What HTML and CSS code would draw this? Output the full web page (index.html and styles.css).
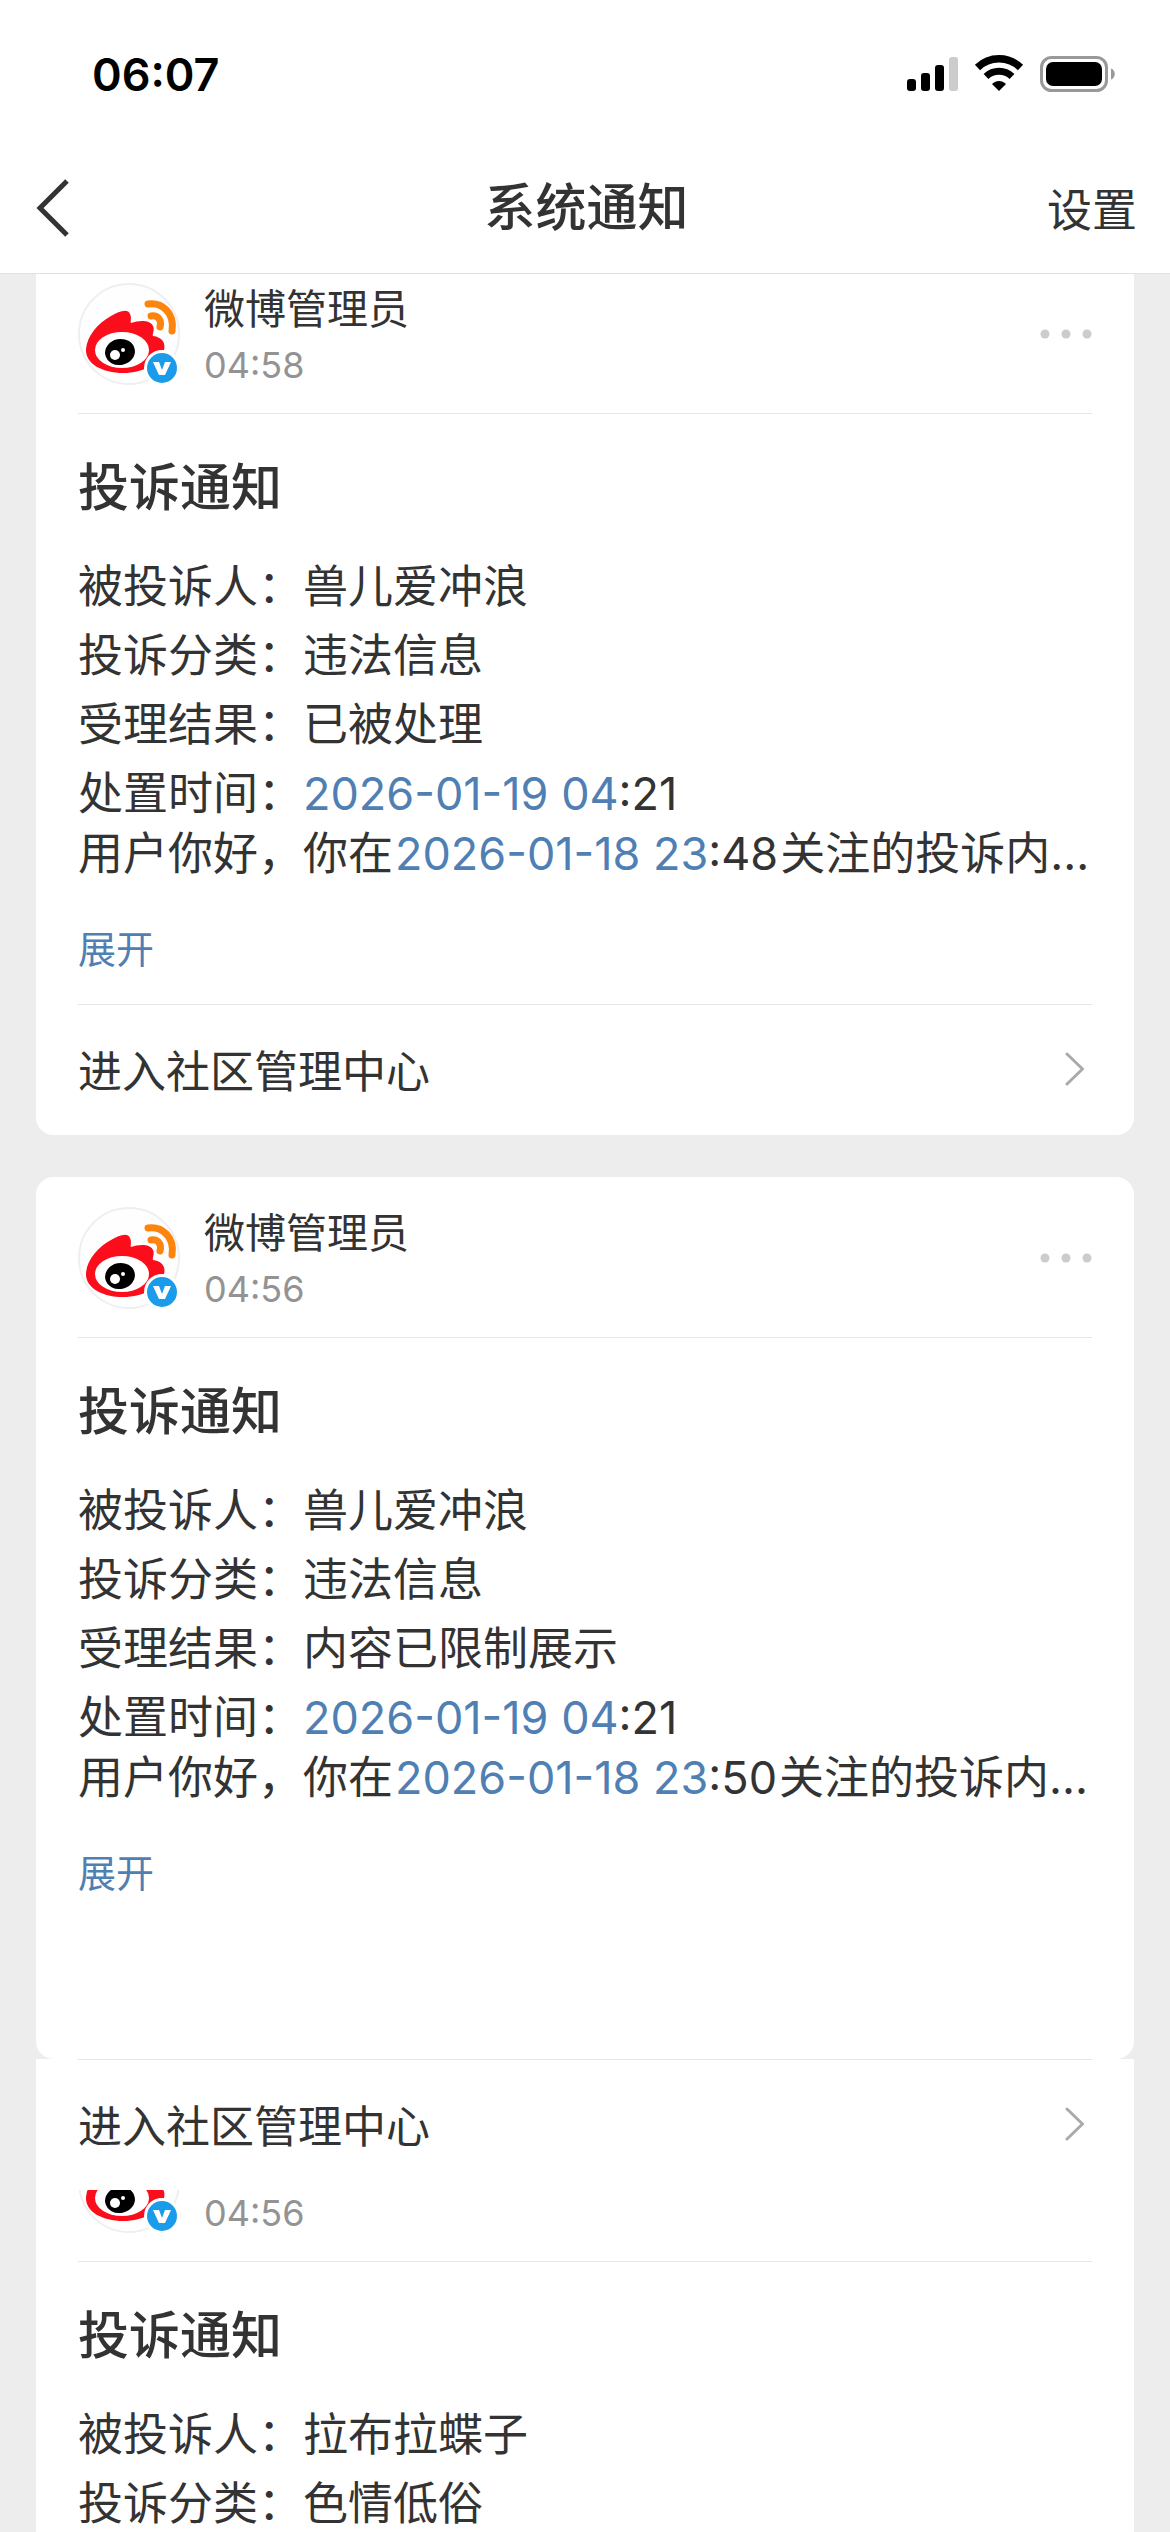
FILE: index.html
```html
<!DOCTYPE html>
<html lang="zh-CN">
<head>
  <meta charset="UTF-8" />
  <meta name="viewport" content="width=device-width, initial-scale=1.0" />
  <title>系统通知</title>
  <link rel="stylesheet" href="styles.css">
</head>
<body>
  <!-- shared shapes -->
  <svg class="sprite" aria-hidden="true">
    <symbol id="avatar" viewBox="0 0 102 102">
      <circle cx="51" cy="51" r="50" fill="#fefefe" stroke="#efefef" stroke-width="2"/>
      <path fill="#fb0d1b" d="M8 66C9 53 20 40 33 33C41 28 50 25 52 31C54 35 52 39 53 40C60 38 71 36 75 43C77 47 74 51 75 53C84 54 88 60 86 67C83 80 66 90 45 90C25 90 7 81 8 66Z"/>
      <ellipse cx="44" cy="67" rx="27" ry="18" fill="#fff"/>
      <ellipse cx="42" cy="69" rx="15" ry="13" fill="#000" transform="rotate(-12 42 69)"/>
      <circle cx="37" cy="72" r="5" fill="#fff"/>
      <circle cx="45" cy="67" r="2" fill="#fff"/>
      <path fill="none" stroke="#fd850d" stroke-width="7" stroke-linecap="round" d="M70 21C84 19 97 30 94 48M73 33C80 32 84 37 82 44"/>
      <circle cx="84" cy="85" r="18" fill="#fff"/>
      <circle cx="84" cy="85" r="15" fill="#1b9cea"/>
      <path fill="#fff" d="M75 79H81L84 87L87 79H93L87 92H81Z"/>
    </symbol>
    <symbol id="dots" viewBox="0 0 52 10">
      <g fill="#ccc">
        <circle cx="5" cy="5" r="4.5"/>
        <circle cx="26" cy="5" r="4.5"/>
        <circle cx="47" cy="5" r="4.5"/>
      </g>
    </symbol>
    <symbol id="arrow" viewBox="0 0 20 36">
      <path d="M2 3L17.5 18L2 33" fill="none" stroke="#aaa" stroke-width="3" stroke-linecap="round" stroke-linejoin="round"/>
    </symbol>
  </svg>

  <header class="top">
    <div class="status">
      <span class="clock">06:07</span>
      <div class="status-icons">
        <svg width="51" height="40" viewBox="0 0 51 40">
          <rect x="0" y="25" width="9" height="12" rx="3"/>
          <rect x="14" y="19" width="9" height="18" rx="3"/>
          <rect x="28" y="11" width="9" height="26" rx="3"/>
          <rect x="42" y="3" width="9" height="34" rx="3" fill="#ccc"/>
        </svg>
        <svg width="50" height="40" viewBox="0 0 50 40">
          <g fill="none" stroke="#000">
            <path d="M3.5 13.5A31 31 0 0 1 46.5 13.5" stroke-width="7.5"/>
            <path d="M12 22.5A19 19 0 0 1 38 22.5" stroke-width="7"/>
          </g>
          <path d="M18 30C22 26 28 26 32 30L25 37Z"/>
        </svg>
        <svg width="76" height="40" viewBox="0 0 76 40">
          <rect x="1.5" y="3.5" width="65" height="33" rx="10" fill="none" stroke="#999" stroke-width="3"/>
          <rect x="6" y="8" width="56" height="24" rx="7"/>
          <path d="M71 14.5C76 16 76 24 71 25.5Z" fill="#999"/>
        </svg>
      </div>
    </div>
    <nav class="nav">
      <button class="back" type="button" aria-label="返回">
        <svg width="36" height="60" viewBox="0 0 36 60">
          <path d="M31 3L4 30L31 57" fill="none" stroke="#333" stroke-width="5"/>
        </svg>
      </button>
      <h1>系统通知</h1>
      <a class="settings" href="#">设置</a>
    </nav>
  </header>

  <main class="feed">
    <article class="card">
      <div class="card-head">
        <svg class="avatar"><use href="#avatar"/></svg>
        <div class="who">
          <span class="name">微博管理员</span>
          <time>04:58</time>
        </div>
        <button class="more" type="button" aria-label="更多"><svg><use href="#dots"/></svg></button>
      </div>
      <div class="card-body">
        <h2>投诉通知</h2>
        <p>被投诉人：兽儿爱冲浪</p>
        <p>投诉分类：违法信息</p>
        <p>受理结果：已被处理</p>
        <p>处置时间：<a href="#">2026-01-19 04</a>:21</p>
        <p class="detail">用户你好，你在<a class="inset" href="#">2026-01-18 23</a>:48<span class="inset">关注的投诉内...</span></p>
        <button class="expand" type="button">展开</button>
      </div>
      <a class="card-foot" href="#">
        <span>进入社区管理中心</span>
        <svg class="arrow"><use href="#arrow"/></svg>
      </a>
    </article>

    <article class="card shifted">
      <div class="card-head">
        <svg class="avatar"><use href="#avatar"/></svg>
        <div class="who">
          <span class="name">微博管理员</span>
          <time>04:56</time>
        </div>
        <button class="more" type="button" aria-label="更多"><svg><use href="#dots"/></svg></button>
      </div>
      <div class="card-body">
        <h2>投诉通知</h2>
        <p>被投诉人：兽儿爱冲浪</p>
        <p>投诉分类：违法信息</p>
        <p>受理结果：内容已限制展示</p>
        <p>处置时间：<a href="#">2026-01-19 04</a>:21</p>
        <p class="detail">用户你好，你在<a class="inset" href="#">2026-01-18 23</a>:50<span class="inset">关注的投诉内...</span></p>
        <button class="expand" type="button">展开</button>
      </div>
      <a class="card-foot" href="#">
        <span>进入社区管理中心</span>
        <svg class="arrow"><use href="#arrow"/></svg>
      </a>
    </article>

    <article class="card covered">
      <div class="card-head">
        <svg class="avatar"><use href="#avatar"/></svg>
        <div class="who">
          <time>04:56</time>
        </div>
      </div>
      <div class="card-body">
        <h2>投诉通知</h2>
        <p>被投诉人：拉布拉蝶子</p>
        <p>投诉分类：色情低俗</p>
      </div>
    </article>
  </main>
</body>
</html>
```
FILE: styles.css
```css
* {
  box-sizing: border-box;
}
body {
  margin: 0;
  height: 100vh;
  overflow: hidden;
  display: flex;
  flex-direction: column;
  background: #ededed;
  color: #333;
  font-family: Inter, "Noto Sans CJK SC", sans-serif;
  font-size: 45px;
}
h1, h2, p {
  margin: 0;
}
a {
  color: #507fb4;
  text-decoration: none;
}
button {
  padding: 0;
  border: 0;
  background: none;
  font: inherit;
  text-align: left;
}
svg {
  display: block;
  flex: none;
}
.sprite {
  width: 0;
  height: 0;
  position: absolute;
}

/* status bar + title bar */
.top {
  position: relative;
  z-index: 2;
  flex: none;
  background: #fff;
  border-bottom: 1px solid #e2e2e2;
}
.status {
  height: 148px;
  padding: 0 54px 0 92px;
  display: flex;
  align-items: center;
  justify-content: space-between;
  color: #000;
}
.clock {
  font-size: 45px;
  font-weight: 600;
}
.status-icons {
  display: flex;
  gap: 16px;
}
.nav {
  height: 125px;
  padding: 0 33px 5px 36px;
  display: grid;
  grid-template-columns: 1fr auto 1fr;
  align-items: center;
}
h1, h2 {
  font-size: 51px;
  font-weight: 500;
}
h1 {
  line-height: 60px;
}
.settings {
  justify-self: end;
  padding-top: 6px;
  color: #333;
  font-size: 45px;
  line-height: 60px;
}

/* cards */
.feed {
  flex: 1;
  min-height: 0;
  margin-top: -21px;
  padding: 0 36px;
}
.card {
  position: relative;
  margin-bottom: 42px;
  background: #fff;
  border-radius: 18px;
}
.card-head {
  height: 161px;
  margin: 0 42px;
  padding: 30px 0 28px;
  display: flex;
  align-items: center;
  gap: 24px;
  border-bottom: 1px solid #e6e6e6;
}
.avatar {
  width: 102px;
  height: 102px;
}
.who {
  flex: 1;
  padding-top: 6px;
  display: flex;
  flex-direction: column;
}
.name {
  font-size: 41px;
  line-height: 56px;
}
time {
  color: #939393;
  font-size: 36px;
  line-height: 56px;
}
.more svg {
  width: 52px;
  height: 10px;
}
.card-body {
  padding: 40px 42px 25px;
}
h2 {
  line-height: 68px;
  margin-bottom: 30px;
}
p {
  line-height: 69px;
  white-space: nowrap;
}
.detail {
  line-height: 51px;
}
.inset {
  margin-left: 2px;
}
.expand {
  display: block;
  margin-top: 40px;
  color: #507fb4;
  font-size: 38px;
  line-height: 60px;
}
.card-foot {
  height: 131px;
  padding: 0 49px 2px 42px;
  display: flex;
  align-items: center;
  justify-content: space-between;
  color: #333;
  font-size: 44px;
  background: linear-gradient(#e6e6e6, #e6e6e6) center top / calc(100% - 84px) 1px no-repeat #fff;
  border-radius: 0 0 18px 18px;
}
.arrow {
  width: 20px;
  height: 36px;
}

/* footer row hangs below its card and covers the top of the next one */
.shifted {
  padding-bottom: 131px;
}
.shifted .card-foot {
  position: absolute;
  z-index: 1;
  top: 100%;
  left: 0;
  right: 0;
  border-radius: 0;
}
.covered .who {
  padding-top: 62px;
}
```
